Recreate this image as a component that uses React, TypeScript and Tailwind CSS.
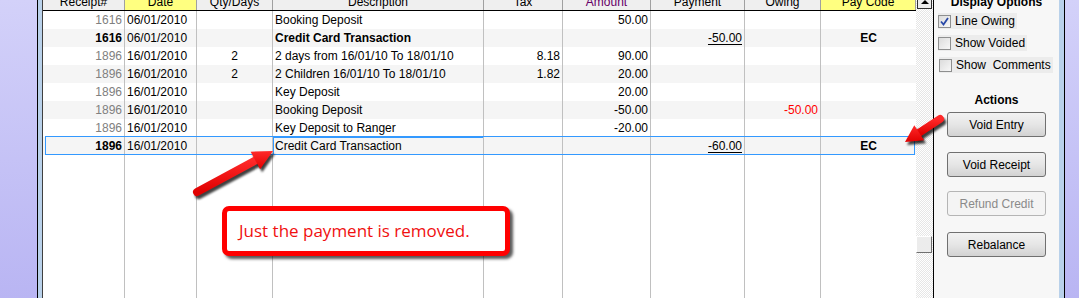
import type { ReactNode } from "react";

type Row = {
  receipt: string;
  date: string;
  qty?: string;
  desc: string;
  tax?: string;
  amount?: string;
  payment?: string;
  owing?: string;
  code?: string;
  strong?: boolean;
  descBold?: boolean;
};

const rows: Row[] = [
  { receipt: "1616", date: "06/01/2010", desc: "Booking Deposit", amount: "50.00" },
  { receipt: "1616", date: "06/01/2010", desc: "Credit Card Transaction", payment: "-50.00", code: "EC", strong: true, descBold: true },
  { receipt: "1896", date: "16/01/2010", qty: "2", desc: "2 days from 16/01/10 To 18/01/10", tax: "8.18", amount: "90.00" },
  { receipt: "1896", date: "16/01/2010", qty: "2", desc: "2 Children 16/01/10 To 18/01/10", tax: "1.82", amount: "20.00" },
  { receipt: "1896", date: "16/01/2010", desc: "Key Deposit", amount: "20.00" },
  { receipt: "1896", date: "16/01/2010", desc: "Booking Deposit", amount: "-50.00", owing: "-50.00" },
  { receipt: "1896", date: "16/01/2010", desc: "Key Deposit to Ranger", amount: "-20.00" },
  { receipt: "1896", date: "16/01/2010", desc: "Credit Card Transaction", payment: "-60.00", code: "EC", strong: true },
];

const cols = "grid grid-cols-[82px_72px_76px_211px_79px_88px_94px_76px_95px]";
const cell = "h-[18px] leading-[18px] whitespace-nowrap overflow-hidden border-r border-[#c0c0c0]";

function HeadCell({ children, yellow, purple }: { children: ReactNode; yellow?: boolean; purple?: boolean }) {
  return (
    <div
      className={`flex h-[10px] items-end justify-center overflow-hidden border-r border-[#a0a0a0] ${
        yellow ? "bg-[#ffff80]" : "bg-[#efefef]"
      } ${purple ? "text-[#660066]" : "text-black"}`}
    >
      <span className="pb-[1px] leading-[14px]">{children}</span>
    </div>
  );
}

function CheckRow({ label, checked, className }: { label: string; checked?: boolean; className: string }) {
  return (
    <div className={`flex h-[16px] items-center gap-[4px] self-start bg-[#ececec] pr-[2px] ${className}`}>
      <span className="flex h-[13px] w-[13px] items-center justify-center border border-[#8e8f8f] bg-gradient-to-br from-[#dcdcdc] to-[#f8f8f8]">
        {checked && (
          <svg width="9" height="9" viewBox="0 0 9 9">
            <path d="M1 4.5 L3.5 7.5 L8 1" fill="none" stroke="#2a4aa8" strokeWidth="1.8" />
          </svg>
        )}
      </span>
      <span className="leading-[14px]">{label}</span>
    </div>
  );
}

function Button({ children, disabled, className }: { children: ReactNode; disabled?: boolean; className: string }) {
  return (
    <div
      className={`mx-auto flex h-[25px] w-[99px] items-center justify-center rounded-[3px] border ${
        disabled
          ? "border-[#b5b5b5] bg-[#f4f4f4] text-[#8a8a8a]"
          : "border-[#707070] bg-gradient-to-b from-[#f2f2f2] via-[#e6e6e6] to-[#d2d2d2] text-black"
      } ${className}`}
    >
      {children}
    </div>
  );
}

function Arrow({ x1, y1, x2, y2, hl, hw, sw }: { x1: number; y1: number; x2: number; y2: number; hl: number; hw: number; sw: number }) {
  const len = Math.hypot(x2 - x1, y2 - y1);
  const ux = (x2 - x1) / len;
  const uy = (y2 - y1) / len;
  const bx = x2 - ux * hl;
  const by = y2 - uy * hl;
  const nx = -uy;
  const ny = ux;
  const head = `${x2},${y2} ${bx + nx * hw},${by + ny * hw} ${bx - nx * hw},${by - ny * hw}`;
  const shape = (fill: string, dx: number, dy: number, extra?: string) => (
    <g transform={`translate(${dx} ${dy})`} filter={extra}>
      <line x1={x1} y1={y1} x2={bx + ux * 2} y2={by + uy * 2} stroke={fill} strokeWidth={sw} strokeLinecap="round" />
      <polygon points={head} fill={fill} strokeLinejoin="round" />
    </g>
  );
  return (
    <g>
      {shape("rgba(0,0,0,0.75)", 2, 3, "url(#blur)")}
      {shape("url(#red)", 0, 0)}
    </g>
  );
}

export default function App() {
  return (
    <div className="relative flex h-[298px] w-[1079px] overflow-hidden font-['Liberation_Sans',Arial,sans-serif] text-[12px] text-black">
      <div className="w-[37px] bg-gradient-to-b from-[#d3d1f9] to-[#b9b5f3]" />
      <div className="w-px bg-black" />
      <div className="w-[4px] bg-[#b9d1ea]" />
      <div className="w-px bg-[#404040]" />

      {/* grid */}
      <div className="flex w-[873px] flex-col bg-white">
        <div className={`${cols} border-b border-black`}>
          <HeadCell>Receipt#</HeadCell>
          <HeadCell yellow>Date</HeadCell>
          <HeadCell>Qty/Days</HeadCell>
          <HeadCell>Description</HeadCell>
          <HeadCell>Tax</HeadCell>
          <HeadCell purple>Amount</HeadCell>
          <HeadCell>Payment</HeadCell>
          <HeadCell>Owing</HeadCell>
          <HeadCell yellow>Pay Code</HeadCell>
        </div>

        {rows.map((row, i) => {
          const selected = i === rows.length - 1;
          return (
            <div key={i} className={`relative ${cols} ${i % 2 ? "bg-[#f5f5f5]" : "bg-white"}`}>
              <div className={`${cell} pr-[2px] text-right ${row.strong ? "font-bold text-black" : "text-[#808080]"}`}>
                {row.receipt}
              </div>
              <div className={`${cell} pl-[2px]`}>{row.date}</div>
              <div className={`${cell} text-center`}>{row.qty}</div>
              <div className={`${cell} relative pl-[2px] ${row.descBold ? "font-bold" : ""}`}>
                {row.desc}
                {selected && <div className="absolute inset-y-0 left-0 -right-px border border-[#3399ff]" />}
              </div>
              <div className={`${cell} pr-[2px] text-right`}>{row.tax}</div>
              <div className={`${cell} pr-[2px] text-right`}>{row.amount}</div>
              <div className={`${cell} pr-[2px] text-right underline underline-offset-2`}>{row.payment}</div>
              <div className={`${cell} pr-[2px] text-right text-[#ff0000]`}>{row.owing}</div>
              <div className={`${cell} border-r-0 text-center font-bold`}>{row.code}</div>
              {selected && (
                <div className="pointer-events-none absolute -top-px bottom-0 left-[2px] right-px border border-[#3399ff]" />
              )}
            </div>
          );
        })}

        <div className={`${cols} flex-1`}>
          {Array.from({ length: 9 }).map((_, i) => (
            <div key={i} className={i < 8 ? "border-r border-[#c0c0c0]" : ""} />
          ))}
        </div>
      </div>

      {/* scrollbar */}
      <div className="flex w-[17px] flex-col bg-[repeating-conic-gradient(#e6e6e6_0_25%,#ffffff_0_50%)] bg-[length:2px_2px]">
        <div className="ml-[1px] flex h-[9px] w-[15px] justify-center border border-t-0 border-[#303030] bg-[#ececec]">
          <div className="h-0 w-0 border-x-[4px] border-b-[4px] border-x-transparent border-b-black" />
        </div>
        <div className="mt-[227px] h-[17px] w-[16px] border border-[#707070] border-l-white border-t-white bg-[#ececec]" />
      </div>
      <div className="w-px bg-black" />

      {/* side panel */}
      <div className="flex w-[125px] flex-col bg-[#f7f7f7]">
        <div className="-mt-[5px] text-center font-bold leading-[14px]">Display Options</div>
        <CheckRow label="Line Owing" checked className="ml-[4px] mt-[4px]" />
        <CheckRow label="Show Voided" className="ml-[4px] mt-[6px]" />
        <CheckRow label="Show  Comments" className="ml-[5px] mt-[6px] whitespace-pre" />
        <div className="mt-[20px] text-center font-bold leading-[14px]">Actions</div>
        <Button className="mt-[5px]">Void Entry</Button>
        <Button className="mt-[15px]">Void Receipt</Button>
        <Button disabled className="mt-[14px]">Refund Credit</Button>
        <Button className="mt-[16px]">Rebalance</Button>
      </div>

      <div className="w-[5px] bg-[#b9d1ea]" />
      <div className="w-px bg-black" />
      <div className="flex-1 bg-gradient-to-b from-[#d3d1f9] to-[#b9b5f3]" />

      {/* annotations */}
      <div className="absolute left-[222px] top-[206px] flex h-[50px] w-[288px] items-center rounded-[7px] border-[5px] border-[#ff0000] bg-white pl-[12px] shadow-[3px_3px_3px_rgba(0,0,0,0.65)]">
        <span className="font-['Open_Sans',sans-serif] text-[17px] leading-[20px] text-[#f01010]">
          Just the payment is removed.
        </span>
      </div>
      <svg className="pointer-events-none absolute left-0 top-0" width="1079" height="298">
        <defs>
          <filter id="blur" x="-20%" y="-20%" width="140%" height="140%">
            <feGaussianBlur stdDeviation="1.2" />
          </filter>
          <linearGradient id="red" x1="0" y1="0" x2="0" y2="1">
            <stop offset="0" stopColor="#ff2a2a" />
            <stop offset="1" stopColor="#e00000" />
          </linearGradient>
        </defs>
        <Arrow x1={197} y1={192} x2={273} y2={151} hl={20} hw={10} sw={8} />
        <Arrow x1={940} y1={119} x2={905} y2={142} hl={17} hw={9} sw={8} />
      </svg>
    </div>
  );
}
